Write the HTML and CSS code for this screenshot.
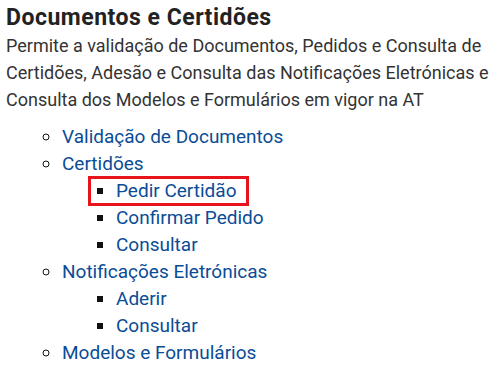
FILE: index.html
```html
<!DOCTYPE html>
<html lang="pt">
<head>
<meta charset="utf-8">
<title>Documentos e Certidões</title>
<link rel="stylesheet" href="styles.css">
</head>
<body>
<div class="page">
  <h2 class="title">Documentos e Certidões</h2>
  <p class="intro">Permite a validação de Documentos, Pedidos e Consulta de Certidões, Adesão e Consulta das Notificações Eletrónicas e Consulta dos Modelos e Formulários em vigor na AT</p>
  <ul class="menu">
    <li><a href="#">Validação de Documentos</a></li>
    <li><a href="#">Certidões</a>
      <ul class="submenu">
        <li class="highlight"><a href="#">Pedir Certidão</a></li>
        <li><a href="#">Confirmar Pedido</a></li>
        <li><a href="#">Consultar</a></li>
      </ul>
    </li>
    <li><a href="#">Notificações Eletrónicas</a>
      <ul class="submenu">
        <li><a href="#">Aderir</a></li>
        <li><a href="#">Consultar</a></li>
      </ul>
    </li>
    <li><a href="#">Modelos e Formulários</a></li>
  </ul>
</div>
</body>
</html>
```
FILE: styles.css
```css
html, body {
  margin: 0;
  padding: 0;
  background: #ffffff;
}
body {
  font-family: Roboto, "Liberation Sans", Arial, sans-serif;
}
.page {
  padding: 4px 0 0 6px;
}
.title {
  margin: 0;
  font-size: 23px;
  font-weight: 700;
  letter-spacing: 0.5px;
  line-height: 28px;
  color: #222222;
}
.intro {
  margin: 0;
  font-size: 18px;
  line-height: 27px;
  color: #333333;
}
.menu {
  margin: 10px 0 0 0;
  padding-left: 56px;
  list-style: circle;
  font-size: 19px;
  line-height: 27px;
  color: #111111;
}
.submenu {
  margin: 0;
  padding-left: 54px;
  list-style: square;
}
.menu a {
  color: #0a4c96;
  text-decoration: none;
}
.highlight {
  position: relative;
  width: fit-content;
}
.highlight::after {
  content: "";
  position: absolute;
  left: -28px;
  right: -12px;
  top: -1px;
  bottom: -2px;
  border: 3px solid #e8141b;
  pointer-events: none;
}
```
